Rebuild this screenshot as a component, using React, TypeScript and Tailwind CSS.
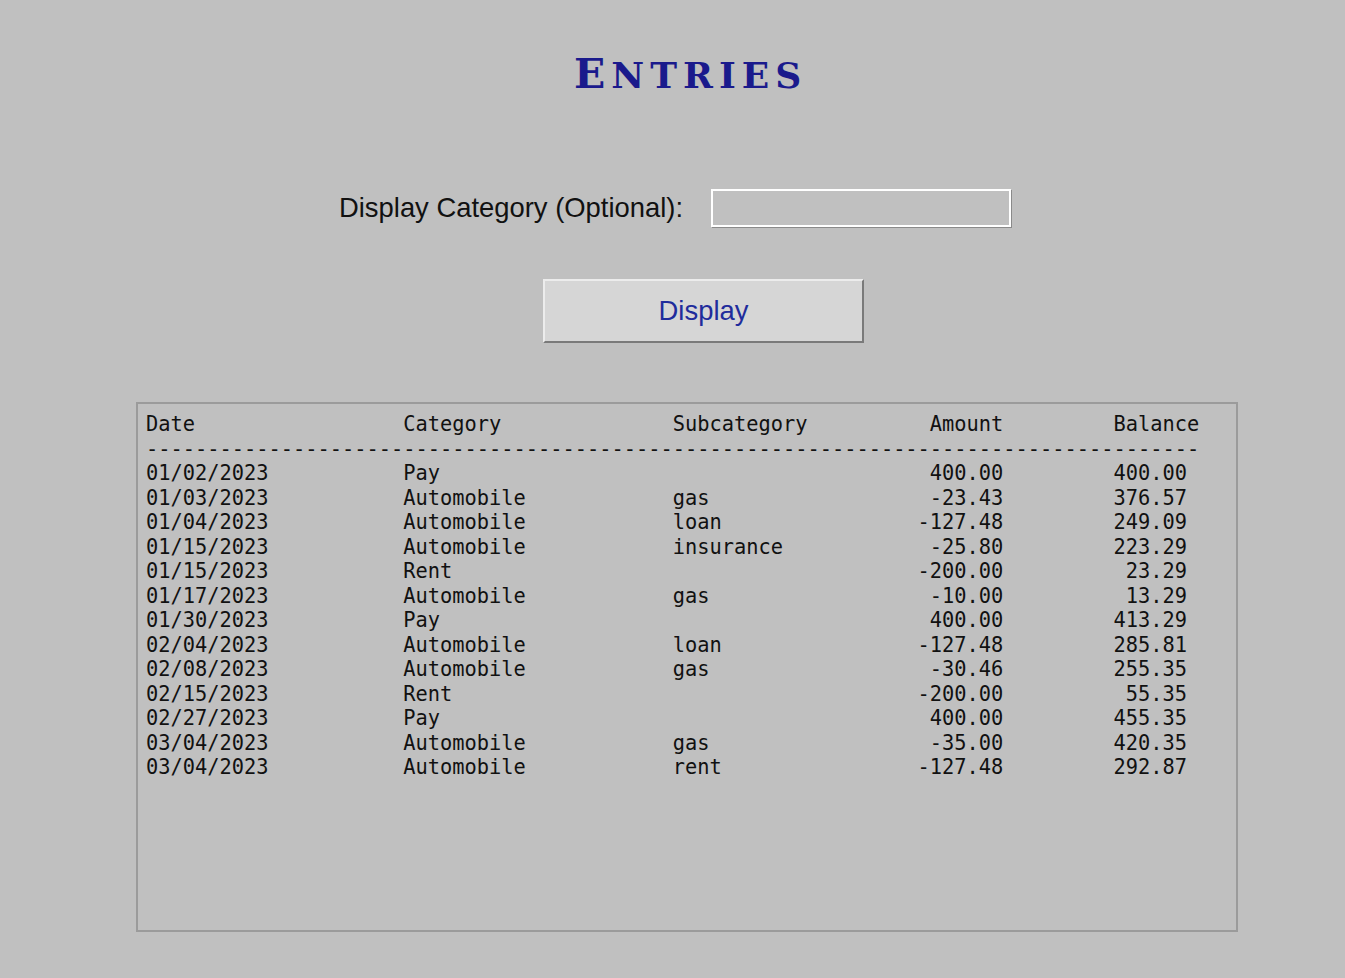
import React from "react";

const entries = [
  { date: "01/02/2023", cat: "Pay", sub: "", amount: "400.00", balance: "400.00" },
  { date: "01/03/2023", cat: "Automobile", sub: "gas", amount: "-23.43", balance: "376.57" },
  { date: "01/04/2023", cat: "Automobile", sub: "loan", amount: "-127.48", balance: "249.09" },
  { date: "01/15/2023", cat: "Automobile", sub: "insurance", amount: "-25.80", balance: "223.29" },
  { date: "01/15/2023", cat: "Rent", sub: "", amount: "-200.00", balance: "23.29" },
  { date: "01/17/2023", cat: "Automobile", sub: "gas", amount: "-10.00", balance: "13.29" },
  { date: "01/30/2023", cat: "Pay", sub: "", amount: "400.00", balance: "413.29" },
  { date: "02/04/2023", cat: "Automobile", sub: "loan", amount: "-127.48", balance: "285.81" },
  { date: "02/08/2023", cat: "Automobile", sub: "gas", amount: "-30.46", balance: "255.35" },
  { date: "02/15/2023", cat: "Rent", sub: "", amount: "-200.00", balance: "55.35" },
  { date: "02/27/2023", cat: "Pay", sub: "", amount: "400.00", balance: "455.35" },
  { date: "03/04/2023", cat: "Automobile", sub: "gas", amount: "-35.00", balance: "420.35" },
  { date: "03/04/2023", cat: "Automobile", sub: "rent", amount: "-127.48", balance: "292.87" },
];

const header =
  "Date".padEnd(21) +
  "Category".padEnd(22) +
  "Subcategory".padEnd(14) +
  "Amount".padStart(13) +
  "Balance".padStart(16);

const report = [
  header,
  "-".repeat(86),
  ...entries.map(
    (e) =>
      e.date.padEnd(21) +
      e.cat.padEnd(22) +
      e.sub.padEnd(14) +
      e.amount.padStart(13) +
      e.balance.padStart(15)
  ),
].join("\n");

export default function App() {
  return (
    <div className="min-h-screen w-full bg-[#c0c0c0] pt-[44px] font-['Liberation_Sans',Arial,sans-serif]">
      {/* Title */}
      <h1 className="ml-[574px] h-[60px] leading-[60px] font-['DejaVu_Serif',serif] font-bold text-[#1a1a8c] tracking-[6px]">
        <span className="text-[41px]">E</span>
        <span className="text-[36px] uppercase">ntries</span>
      </h1>

      {/* Filter */}
      <div className="mt-[85px] ml-[339px] flex items-center h-[38px]">
        <label className="text-[27.4px] text-[#111] w-[372px]">Display Category (Optional):</label>
        <input
          type="text"
          className="w-[300px] h-[38px] bg-[#c0c0c0] border-2 border-white shadow-[1px_1px_0_#8a8a8a] outline-none px-2 text-[20px]"
        />
      </div>

      {/* Button */}
      <button className="block mt-[52px] ml-[543px] w-[321px] h-[64px] bg-[#d6d6d6] border-t-2 border-l-2 border-[#ececec] border-r-2 border-b-2 border-r-[#7a7a7a] border-b-[#7a7a7a] text-[27.4px] text-[#1f2c9c]">
        Display
      </button>

      {/* Report */}
      <div className="mt-[59px] ml-[136px] w-[1102px] h-[530px] border-2 border-[#9b9b9b] pl-[8px] pt-[8px]">
        <pre className="m-0 font-['DejaVu_Sans_Mono',monospace] text-[20.35px] leading-[24.5px] text-[#111]">
          {report}
        </pre>
      </div>
    </div>
  );
}
